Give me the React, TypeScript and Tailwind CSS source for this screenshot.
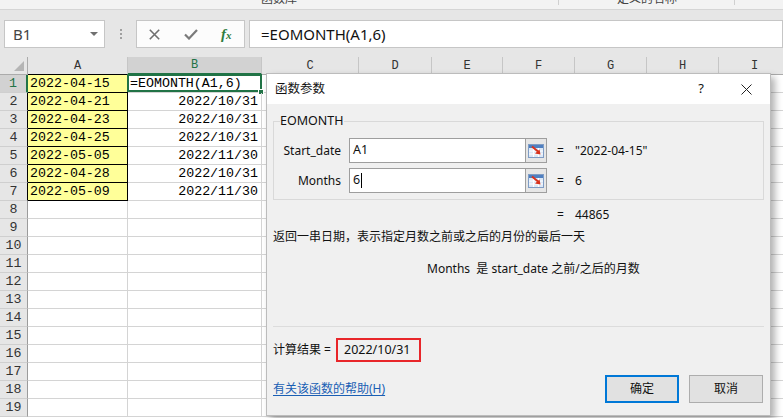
import type { ReactNode } from "react";

const UI = "font-['Noto_Sans','Noto_Sans_CJK_SC',sans-serif]";
const CELL = "font-['Liberation_Mono','Noto_Sans_CJK_SC',monospace]";

const COLS = [
  { id: "A", w: "w-[100px]" },
  { id: "B", w: "w-[134px]" },
  { id: "C", w: "w-[97px]" },
  { id: "D", w: "w-[73px]" },
  { id: "E", w: "w-[71px]" },
  { id: "F", w: "w-[72px]" },
  { id: "G", w: "w-[72px]" },
  { id: "H", w: "w-[72px]" },
  { id: "I", w: "w-[72px]" },
];

const DATES = [
  "2022-04-15",
  "2022-04-21",
  "2022-04-23",
  "2022-04-25",
  "2022-05-05",
  "2022-04-28",
  "2022-05-09",
];

const RESULTS = [
  "=EOMONTH(A1,6)",
  "2022/10/31",
  "2022/10/31",
  "2022/10/31",
  "2022/11/30",
  "2022/10/31",
  "2022/11/30",
];

function RefIcon() {
  return (
    <svg width="16" height="14" viewBox="0 0 16 14">
      <rect x="0.5" y="0.5" width="15" height="13" fill="#dce8f6" stroke="#7f9cc4" />
      <rect x="1" y="1" width="14" height="3" fill="#4f7fc0" />
      <path d="M1 7h14M1 10h14M5.5 4v9M10.5 4v9" stroke="#ffffff" strokeWidth="1" />
      <path d="M4 2.5 10 7.5" stroke="#d8321c" strokeWidth="2" />
      <path d="M12.5 10.5 7 9.5 11.5 5.5Z" fill="#d8321c" />
    </svg>
  );
}

function ArgRow({ label, value, result, active }: { label: string; value: string; result: string; active?: boolean }) {
  return (
    <div className="flex h-[25px] items-center">
      <div className="w-[67px] shrink-0 text-right">{label}</div>
      <div className="ml-[8px] flex h-full w-[177px] items-center border border-[#9e9e9e] bg-white pl-[3px] text-[12.5px]">
        {value}
        {active && <span className="ml-[1px] h-[15px] w-px bg-black" />}
      </div>
      <div className="flex h-full w-[21px] items-center justify-center border border-l-0 border-[#9e9e9e] bg-[#e6e6e6]">
        <RefIcon />
      </div>
      <span className="ml-[10px] w-[18px]">=</span>
      <span>{result}</span>
    </div>
  );
}

function Btn({ children, primary }: { children: ReactNode; primary?: boolean }) {
  return (
    <div
      className={`flex h-[28px] w-[74px] items-center justify-center bg-[#e1e1e1] ${
        primary ? "border-2 border-[#0078d7]" : "border border-[#adadad]"
      }`}
    >
      {children}
    </div>
  );
}

function FunctionDialog() {
  return (
    <div
      className={`absolute left-[266px] top-[73px] flex h-[343px] w-[505px] flex-col border border-[#bcbcbc] bg-[#f0f0f0] text-[12px] text-[#111] shadow-[4px_4px_7px_rgba(0,0,0,0.3)] ${UI}`}
    >
      {/* title bar */}
      <div className="flex h-[30px] shrink-0 items-center bg-white pl-[8px]">
        <span className="text-[12.5px]">函数参数</span>
        <span className="ml-auto text-[13px]">?</span>
        <svg className="ml-[37px] mr-[18px]" width="11" height="11" viewBox="0 0 11 11">
          <path d="M0.5 0.5 10.5 10.5M10.5 0.5 0.5 10.5" stroke="#222" strokeWidth="1" />
        </svg>
      </div>

      {/* argument group */}
      <fieldset className="mx-[6px] mt-[9px] border border-[#d9d9d9] px-0 pb-[6px] pt-[9px]">
        <legend className="ml-[6px] px-0 text-[12.5px] leading-[16px]">EOMONTH</legend>
        <ArgRow label="Start_date" value="A1" result={'"2022-04-15"'} />
        <div className="h-[5px]" />
        <ArgRow label="Months" value="6" result="6" active />
      </fieldset>

      <div className="mt-[7px] flex h-[16px] items-center pl-[290px]">
        <span className="w-[18px]">=</span>
        <span>44865</span>
      </div>
      <div className="mt-[6px] h-[16px] pl-[6px] leading-[16px]">
        返回一串日期，表示指定月数之前或之后的月份的最后一天
      </div>
      <div className="mt-[16px] h-[16px] pl-[160px] leading-[16px]">
        Months&nbsp;&nbsp;是 start_date 之前/之后的月数
      </div>

      <div className="mx-[6px] mt-[49px] border-t border-[#dcdcdc]" />

      <div className="mt-[11px] flex h-[24px] items-center pl-[6px]">
        <span>计算结果 =</span>
        <div className="ml-[5px] flex h-[24px] w-[85px] items-center border-2 border-[#e8262a] pl-[6px] text-[12.5px]">
          2022/10/31
        </div>
      </div>

      <div className="mt-[13px] flex items-center pl-[6px] pr-[7px]">
        <span className="text-[#1a5fb4] underline underline-offset-2">有关该函数的帮助(H)</span>
        <div className="ml-auto flex gap-[10px]">
          <Btn primary>确定</Btn>
          <Btn>取消</Btn>
        </div>
      </div>
    </div>
  );
}

function FormulaBar() {
  return (
    <div className={`flex h-[28px] bg-[#e6e6e6] pl-[4px] ${UI}`}>
      <div className="flex w-[101px] items-center border border-[#c6c6c6] bg-white pl-[8px] text-[15px] text-[#444]">
        B1
        <span className="ml-auto mr-[6px] h-0 w-0 border-x-[4px] border-t-[4px] border-x-transparent border-t-[#707070]" />
      </div>
      <div className="ml-[15px] flex flex-col justify-center gap-[2px]">
        <span className="h-[2px] w-[2px] bg-[#a0a0a0]" />
        <span className="h-[2px] w-[2px] bg-[#a0a0a0]" />
        <span className="h-[2px] w-[2px] bg-[#a0a0a0]" />
      </div>
      <div className="ml-[14px] flex w-[109px] items-center border border-[#c6c6c6] bg-[#fcfcfc] pl-[12px]">
        <svg width="11" height="11" viewBox="0 0 11 11">
          <path d="M0.8 0.8 10.2 10.2M10.2 0.8 0.8 10.2" stroke="#6f6f6f" strokeWidth="1.6" />
        </svg>
        <svg className="ml-[24px]" width="14" height="11" viewBox="0 0 14 11">
          <path d="M1 5.5 5 9.5 13 1" fill="none" stroke="#7a7a7a" strokeWidth="2.2" />
        </svg>
        <span className="ml-[23px] font-['Liberation_Serif',serif] text-[15px] font-bold italic text-[#2f7d3f]">
          f<span className="text-[11px]">x</span>
        </span>
      </div>
      <div className="ml-[4px] flex flex-1 items-center border border-[#c6c6c6] bg-white pl-[11px] text-[15px] text-[#111]">
        =EOMONTH(A1,6)
      </div>
    </div>
  );
}

function Sheet() {
  return (
    <div className={`text-[13.3px] ${CELL}`}>
      {/* column headers */}
      <div className="flex h-[18px]">
        <div className="flex w-[28px] shrink-0 items-end justify-end border-b border-r border-[#ababab] bg-[#e6e6e6] pb-[3px] pr-[3px]">
          <svg width="10" height="10" viewBox="0 0 10 10">
            <path d="M10 0 10 10 0 10Z" fill="#b5b5b5" />
          </svg>
        </div>
        {COLS.map((c) => (
          <div
            key={c.id}
            className={`${c.w} flex shrink-0 items-center justify-center border-r border-r-[#c6c6c6] text-[12px] ${
              c.id === "B"
                ? "border-b-2 border-b-[#217346] bg-[#d2d2d2] text-[#217346]"
                : c.id === "A"
                  ? "border-b border-b-black bg-[#e6e6e6] text-[#333]"
                  : "border-b border-b-[#ababab] bg-[#e6e6e6] text-[#333]"
            }`}
          >
            {c.id}
          </div>
        ))}
      </div>

      {Array.from({ length: 19 }, (_, i) => {
        const r = i + 1;
        const data = r <= 7;
        return (
          <div key={r} className="flex h-[18px]">
            <div
              className={`flex w-[28px] shrink-0 items-center justify-center border-b border-b-[#cfcfcf] ${
                r === 1
                  ? "border-r-2 border-r-[#217346] bg-[#d2d2d2] text-[#217346]"
                  : data
                    ? "border-r border-r-black bg-[#e6e6e6] text-[#333]"
                    : "border-r border-r-[#9b9b9b] bg-[#e6e6e6] text-[#333]"
              }`}
            >
              {r}
            </div>
            <div
              className={`flex w-[100px] shrink-0 items-center pl-[2px] ${
                data ? "border-b border-r border-black bg-[#ffff99]" : "border-b border-r border-[#d4d4d4]"
              }`}
            >
              {data ? DATES[i] : ""}
            </div>
            <div
              className={`relative flex w-[134px] shrink-0 items-center border-b border-r border-[#d4d4d4] ${
                r === 1 ? "justify-start pl-[2px]" : "justify-end pr-[3px]"
              }`}
            >
              {data ? RESULTS[i] : ""}
              {r === 1 && (
                <>
                  <div className="absolute -left-[1px] -top-[1px] -bottom-[0px] -right-[1px] border-2 border-[#217346]" />
                  <div className="absolute -bottom-[3px] -right-[3px] h-[6px] w-[6px] border border-white bg-[#217346]" />
                </>
              )}
            </div>
            {COLS.slice(2).map((c) => (
              <div key={c.id} className={`${c.w} shrink-0 border-b border-r border-[#d4d4d4]`} />
            ))}
          </div>
        );
      })}
    </div>
  );
}

export default function App() {
  return (
    <div className="relative h-[418px] w-[783px] overflow-hidden bg-white">
      {/* ribbon bottom edge */}
      <div className={`flex h-[10px] overflow-hidden border-b border-[#d5d5d5] bg-[#f3f3f3] text-[12px] text-[#444] ${UI}`}>
        <span className="ml-[261px] -mt-[9px] leading-[16px]">函数库</span>
        <span className="ml-[261px] h-[5px] w-px bg-[#d0d0d0]" />
        <span className="ml-[58px] -mt-[9px] leading-[16px]">定义的名称</span>
        <span className="ml-[57px] h-[5px] w-px bg-[#d0d0d0]" />
      </div>
      <div className="h-[10px] bg-[#e6e6e6]" />
      <FormulaBar />
      <div className="h-[9px] bg-[#e6e6e6]" />
      <Sheet />
      <FunctionDialog />
    </div>
  );
}
